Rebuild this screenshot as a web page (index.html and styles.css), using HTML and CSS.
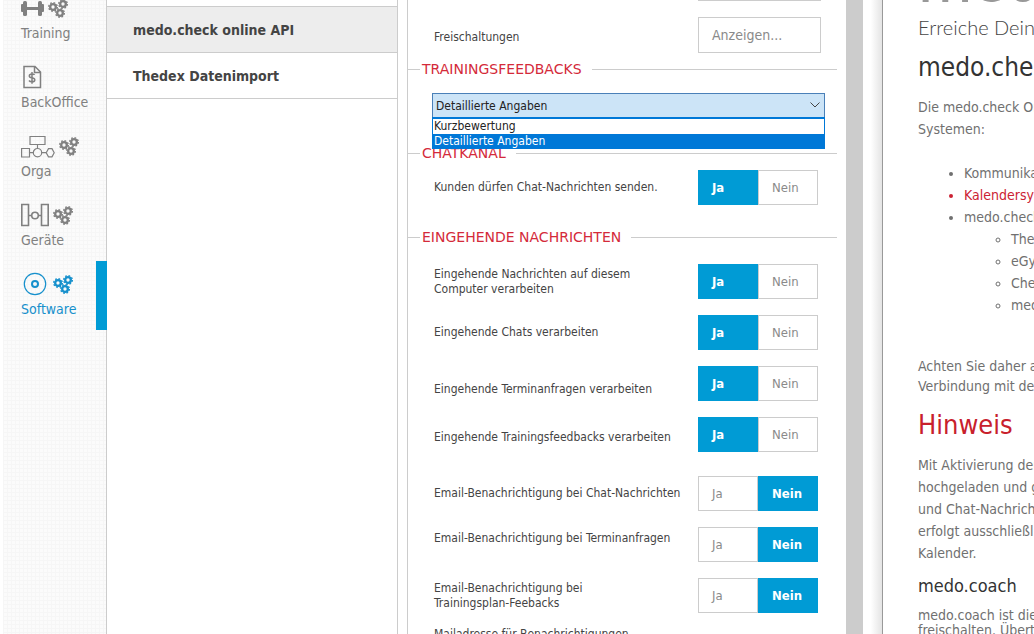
FILE: index.html
```html
<!DOCTYPE html>
<html lang="de">
<head>
<meta charset="UTF-8">
<meta name="viewport" content="width=device-width, initial-scale=1.0">
<title>medo.check Einstellungen</title>
<link rel="stylesheet" href="styles.css">
</head>
<body>
  <svg class="defs" aria-hidden="true">
    <symbol id="gear" viewBox="0 0 12 12">
      <circle cx="6" cy="6" r="3.400" fill="none" stroke="currentColor" stroke-width="2.800"/>
      <circle cx="6" cy="6" r="5.200" fill="none" stroke="currentColor" stroke-width="1.600" stroke-dasharray="2.040 2.040"/>
    </symbol>
    <symbol id="gears" viewBox="0 0 20 20">
      <use href="#gear" x="0" y="4" width="10" height="10"/>
      <use href="#gear" x="10" y="1" width="10" height="10"/>
      <use href="#gear" x="7" y="10" width="10" height="10"/>
    </symbol>
  </svg>
  <div class="app">
    <nav class="sidebar">
      <a class="side-item" href="#training">
        <span class="icons">
          <svg width="23" height="24" viewBox="0 0 23 24" fill="currentColor"><rect x="0" y="8" width="3" height="8" rx="1"/><rect x="2" y="5" width="4" height="15" rx="1.5"/><rect x="5" y="11" width="13" height="3"/><rect x="17" y="5" width="4" height="15" rx="1.5"/><rect x="20" y="8" width="3" height="8" rx="1"/></svg>
          <svg width="20" height="20"><use href="#gears"/></svg>
        </span>
        <span>Training</span>
      </a>
      <a class="side-item" href="#backoffice">
        <span class="icons">
          <svg width="22" height="24" viewBox="0 0 22 24" fill="none" stroke="currentColor" stroke-width="1.5"><path d="M3 1.500H14L19.500 7V22.500H3zM13.500 1.500V7.500H19.500"/><path d="M13.500 10Q13 9 11 9Q8.300 9 8.300 10.900Q8.300 12.300 11 12.800Q13.800 13.300 13.800 15Q13.800 16.800 11 16.800Q8.800 16.800 8 15.500M11 7V18.800"/></svg>
        </span>
        <span>BackOffice</span>
      </a>
      <a class="side-item" href="#orga">
        <span class="icons">
          <svg width="34" height="24" viewBox="0 0 34 24" fill="none" stroke="currentColor" stroke-width="1.200"><path d="M9 2.500H24V10.500H9zM16.500 10.500V14.500M.6 14.500H8.500V23H.6zM8.500 18.700H12.500M20.500 18.700H25"/><circle cx="16.500" cy="18.700" r="4.200"/><path d="M27.500 14.600H31L33.200 18.700L31 22.800H27.500L25.200 18.700z"/></svg>
          <svg width="20" height="20"><use href="#gears"/></svg>
        </span>
        <span>Orga</span>
      </a>
      <a class="side-item" href="#geraete">
        <span class="icons">
          <svg width="28" height="24" viewBox="0 0 28 24" fill="none" stroke="currentColor" stroke-width="1.600"><path d="M.8 1.500H7.500V22.500H.8zM20.500 1.500H27.200V22.500H20.500zM7.500 12.500H10.500M17.500 12.500H20.500"/><circle cx="14" cy="12.500" r="3.300"/></svg>
          <svg width="20" height="20"><use href="#gears"/></svg>
        </span>
        <span>Geräte</span>
      </a>
      <a class="side-item active" href="#software">
        <span class="icons">
          <svg width="28" height="24" viewBox="0 0 28 24" fill="none" stroke="currentColor"><circle cx="14" cy="12" r="10.700" stroke-width="1.200"/><circle cx="14" cy="12" r="3" stroke-width="2"/></svg>
          <svg width="20" height="20"><use href="#gears"/></svg>
        </span>
        <span>Software</span>
      </a>
    </nav>

    <nav class="modules">
      <a class="module selected" href="#api">medo.check online API</a>
      <a class="module" href="#thedex">Thedex Datenimport</a>
    </nav>

    <main class="settings">
      <div class="setting first"><button class="btn" type="button" aria-label="Anzeigen"></button></div>
      <div class="setting"><span class="label lower" id="frei">Freischaltungen</span><button class="btn" type="button" aria-describedby="frei">Anzeigen...</button></div>

      <fieldset class="group">
        <legend>TRAININGSFEEDBACKS</legend>
        <div class="dropdown">
          <select class="dropdown-field" aria-label="Trainingsfeedbacks">
            <option>Kurzbewertung</option>
            <option selected>Detaillierte Angaben</option>
          </select>
          <svg class="chevron" width="10" height="6" viewBox="0 0 10 6" fill="none" stroke="#444"><path d="M.5 .5L5 5L9.500 .5"/></svg>
          <ul class="dropdown-list" role="listbox" aria-label="Trainingsfeedbacks">
            <li role="option">Kurzbewertung</li>
            <li role="option" aria-selected="true">Detaillierte Angaben</li>
          </ul>
        </div>
      </fieldset>

      <fieldset class="group chat">
        <legend>CHATKANAL</legend>
        <div class="setting">
          <span class="label" id="l1">Kunden dürfen Chat-Nachrichten senden.</span>
          <div class="toggle" role="group" aria-labelledby="l1"><button type="button" class="on">Ja</button><button type="button">Nein</button></div>
        </div>
      </fieldset>

      <fieldset class="group incoming">
        <legend>EINGEHENDE NACHRICHTEN</legend>
        <div class="setting">
          <span class="label" id="l2">Eingehende Nachrichten auf diesem<br>Computer verarbeiten</span>
          <div class="toggle" role="group" aria-labelledby="l2"><button type="button" class="on">Ja</button><button type="button">Nein</button></div>
        </div>
        <div class="setting">
          <span class="label" id="l3">Eingehende Chats verarbeiten</span>
          <div class="toggle" role="group" aria-labelledby="l3"><button type="button" class="on">Ja</button><button type="button">Nein</button></div>
        </div>
        <div class="setting">
          <span class="label low" id="l4">Eingehende Terminanfragen verarbeiten</span>
          <div class="toggle" role="group" aria-labelledby="l4"><button type="button" class="on">Ja</button><button type="button">Nein</button></div>
        </div>
        <div class="setting">
          <span class="label lower" id="l5">Eingehende Trainingsfeedbacks verarbeiten</span>
          <div class="toggle" role="group" aria-labelledby="l5"><button type="button" class="on">Ja</button><button type="button">Nein</button></div>
        </div>
        <div class="setting mail">
          <span class="label" id="l6">Email-Benachrichtigung bei Chat-Nachrichten</span>
          <div class="toggle" role="group" aria-labelledby="l6"><button type="button">Ja</button><button type="button" class="on">Nein</button></div>
        </div>
        <div class="setting">
          <span class="label high" id="l7">Email-Benachrichtigung bei Terminanfragen</span>
          <div class="toggle" role="group" aria-labelledby="l7"><button type="button">Ja</button><button type="button" class="on">Nein</button></div>
        </div>
        <div class="setting">
          <span class="label" id="l8">Email-Benachrichtigung bei<br>Trainingsplan-Feebacks</span>
          <div class="toggle" role="group" aria-labelledby="l8"><button type="button">Ja</button><button type="button" class="on">Nein</button></div>
        </div>
        <div class="setting last"><span class="label">Mailadresse für Benachrichtigungen</span></div>
      </fieldset>
    </main>

    <div class="scrollbar"></div>
    <div class="shade"></div>

    <article class="help">
      <div class="brand">medo.check</div>
      <p class="slogan">Erreiche Deine Ziele</p>
      <h1>medo.check Online</h1>
      <p class="intro">Die medo.check Online API<br>Systemen:</p>
      <ul>
        <li>Kommunikation</li>
        <li class="red">Kalendersynchronisation</li>
        <li>medo.check
          <ul>
            <li>Thedex</li>
            <li>eGym</li>
            <li>Check</li>
            <li>medo.coach</li>
          </ul>
        </li>
      </ul>
      <p class="tight">Achten Sie daher auf<br>Verbindung mit dem</p>
      <h2>Hinweis</h2>
      <p class="note">Mit Aktivierung der<br>hochgeladen und gespeichert<br>und Chat-Nachrichten<br>erfolgt ausschließlich<br>Kalender.</p>
      <h3>medo.coach</h3>
      <p class="coach">medo.coach ist die<br>freischalten. Übertragung</p>
    </article>
  </div>
</body>
</html>
```
FILE: styles.css
```css
* {
  box-sizing: border-box;
}
body {
  margin: 0;
  background: #fff;
  font-family: "DejaVu Sans Condensed", "Noto Sans", sans-serif;
  font-size: 12px;
  color: #444;
}
button, select {
  font-family: inherit;
}
ul, p, h1, h2, h3 {
  margin: 0;
  padding: 0;
}
.defs {
  position: absolute;
  width: 0;
  height: 0;
}
.app {
  display: flex;
  height: 100vh;
  overflow: hidden;
}

/* left navigation, scrolled a little */
.sidebar {
  flex: 0 0 104px;
  margin-left: 3px;
  padding-top: 54px;
  display: flex;
  flex-direction: column;
  border-right: 1px solid #ccc;
  background-color: #fbfbfb;
  background-image:
    linear-gradient(#f6f6f6 1px, transparent 1px),
    linear-gradient(90deg, #f6f6f6 1px, transparent 1px);
  background-size: 4px 4px;
}
.side-item {
  flex: none;
  height: 69px;
  padding: 10px 0 0 18px;
  color: #808080;
  font-size: 14px;
  line-height: 20px;
  text-decoration: none;
}
.side-item:first-child {
  margin-top: -69px;
}
.side-item.active {
  color: #1690cc;
  border-right: 11px solid #009bd5;
  margin-right: -1px;
}
.icons {
  display: flex;
  align-items: center;
  gap: 4px;
  height: 26px;
  margin-bottom: 2px;
}

.modules {
  flex: 0 0 291px;
  padding-top: 6px;
  border-right: 1px solid #ccc;
}
.module {
  display: block;
  height: 46px;
  padding-left: 26px;
  border-bottom: 1px solid #ccc;
  color: #444;
  font-size: 14px;
  font-weight: bold;
  line-height: 46px;
  text-decoration: none;
}
.module.selected {
  height: 47px;
  border-top: 1px solid #ccc;
  background: #ededed;
}

.settings {
  flex: 0 0 439px;
  margin-left: 9px;
  padding-right: 9px;
  border-left: 1px solid #ccc;
}
.setting {
  display: flex;
  align-items: center;
  height: 51px;
  padding-left: 26px;
}
.setting.first {
  height: 1px;
  margin-bottom: 8px;
  align-items: flex-end;
}
.setting.mail {
  margin-top: 8px;
}
.setting.last {
  height: 26px;
}
.label {
  flex: 0 0 264px;
  line-height: 15px;
  white-space: nowrap;
}
.label.lower {
  padding-top: 5px;
}
.label.low {
  padding-top: 12px;
}
.label.high {
  padding-bottom: 12px;
}
.btn {
  width: 123px;
  height: 36px;
  padding: 0 0 0 13px;
  border: 1px solid #ccc;
  background: #fff;
  color: #8a8a8a;
  font-size: 14px;
  text-align: left;
}
.first .btn {
  margin-left: 264px;
  flex: none;
}
.toggle {
  display: flex;
  width: 120px;
  height: 35px;
}
.toggle button {
  flex: 1;
  padding: 0 0 0 13px;
  border: 1px solid #ccc;
  background: #fff;
  color: #8a8a8a;
  font-size: 13px;
  text-align: left;
}
.toggle .on {
  border-color: #009bd5;
  background: #009bd5;
  color: #fff;
  font-weight: bold;
}

.group {
  min-width: 0;
  height: 84px;
  margin: 0;
  padding: 8px 0 0;
  border: 0;
  border-top: 1px solid #ccc;
}
.group.chat {
  padding-top: 0;
}
.group.incoming {
  height: auto;
  padding-top: 10px;
}
.group legend {
  margin-left: 12px;
  padding: 0 10px 0 2px;
  color: #d42a3a;
  font-family: "DejaVu Sans", sans-serif;
  font-size: 14px;
  line-height: 18px;
}
.dropdown {
  position: relative;
  margin: 7px 12px 0 24px;
}
.dropdown-field {
  display: block;
  width: 100%;
  height: 25px;
  padding: 0 3px;
  appearance: none;
  border: 1px solid #4a80b8;
  border-radius: 0;
  background: #cce4f7;
  color: #222;
  font-size: 12px;
}
.chevron {
  position: absolute;
  top: 9px;
  right: 5px;
}
.dropdown-list {
  position: absolute;
  top: 24px;
  left: 0;
  right: 0;
  border: 1px solid #0078d7;
  border-top-width: 2px;
  border-bottom: 0;
  background: #fff;
  color: #222;
  line-height: 15px;
  list-style: none;
}
.dropdown-list li {
  padding-left: 1px;
}
.dropdown-list [aria-selected] {
  background: #0078d7;
  color: #fff;
}

.scrollbar {
  flex: 0 0 17px;
  background: #ccc;
}
.shade {
  flex: 0 0 20px;
  border-right: 1px solid #999;
  background: linear-gradient(90deg, #fff 40%, #e4e4e4);
}

.help {
  flex: 1;
  min-width: 0;
  padding-left: 35px;
  overflow: hidden;
  color: #707070;
  font-size: 14px;
  line-height: 22px;
  white-space: nowrap;
}
.brand {
  height: 16px;
  margin-top: -12px;
  display: flex;
  align-items: flex-end;
  color: #999;
  font-family: Lato, sans-serif;
  font-size: 66px;
  line-height: 54px;
}
.slogan {
  color: #444;
  font-family: Lato, sans-serif;
  font-size: 20px;
  font-weight: 300;
  line-height: 46px;
}
.help h1 {
  color: #333;
  font-size: 26px;
  font-weight: normal;
  line-height: 34px;
}
.intro {
  margin: 12px 0 22px;
}
.help ul {
  padding-left: 46px;
}
.help ul ul {
  padding-left: 47px;
}
.red {
  color: #cc2233;
}
.tight {
  margin-top: 40px;
  line-height: 20px;
}
.help h2 {
  margin: 12px 0;
  color: #c8202c;
  font-size: 27px;
  font-weight: normal;
  line-height: 34px;
}
.help h3 {
  margin: 10px 0;
  color: #333;
  font-size: 18px;
  font-weight: normal;
  line-height: 24px;
}
.coach {
  line-height: 15px;
}
```
